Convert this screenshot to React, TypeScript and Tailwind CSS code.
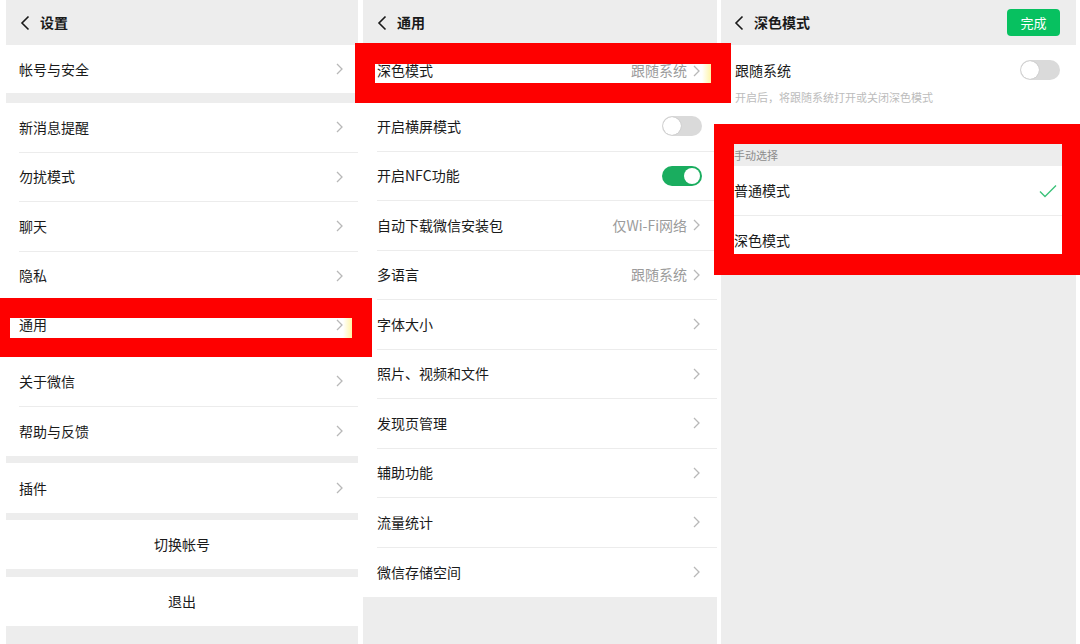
/** Three WeChat settings screens side by side, with red highlight frames. */
import React from "react";

const FONT = "font-['Noto_Sans_CJK_SC','Noto_Sans',sans-serif]";

function Chevron() {
  return (
    <svg width="7" height="12" viewBox="0 0 7 12" className="ml-[6px] shrink-0">
      <path d="M1 1l5 5-5 5" fill="none" stroke="#b8b8b8" strokeWidth="1.3" />
    </svg>
  );
}

function Back() {
  return (
    <svg width="10" height="16" viewBox="0 0 10 16" className="shrink-0">
      <path d="M8.5 1.5L2 8l6.5 6.5" fill="none" stroke="#1a1a1a" strokeWidth="1.6" />
    </svg>
  );
}

function Toggle({ on }: { on: boolean }) {
  if (on) {
    return (
      <div className="flex h-[20px] w-[40px] items-center justify-end rounded-full bg-[#1aad5f] p-[2px]">
        <div className="h-[16px] w-[16px] rounded-full bg-white" />
      </div>
    );
  }
  return (
    <div className="flex h-[20px] w-[40px] items-center rounded-full bg-[#dadada] p-[1px]">
      <div className="h-[18px] w-[18px] rounded-full bg-white shadow-[0_0_1px_rgba(0,0,0,0.3)]" />
    </div>
  );
}

function Header({ title, pad, action }: { title: string; pad: string; action?: React.ReactNode }) {
  return (
    <div className={`flex h-[45px] items-center justify-between bg-[#ededed] ${pad} pr-[16px]`}>
      <div className="flex items-center gap-[10px]">
        <Back />
        <span className="text-[14px] font-bold text-[#1a1a1a]">{title}</span>
      </div>
      {action}
    </div>
  );
}

type RowProps = {
  label: string;
  value?: string;
  right?: React.ReactNode;
  line?: boolean;
  h?: string;
  pl?: string;
  pr?: string;
};

function Row({ label, value, right, line = true, h = "h-[49.5px]", pl = "pl-[13px]", pr = "pr-[15px]" }: RowProps) {
  return (
    <div className={`bg-white ${pl}`}>
      <div className={`flex items-center justify-between ${h} ${pr} ${line ? "border-b border-[#ececec]" : ""}`}>
        <span className="text-[14px] text-[#1a1a1a]">{label}</span>
        <div className="flex items-center">
          {value && <span className="text-[14px] text-[#9b9b9b]">{value}</span>}
          {right ?? <Chevron />}
        </div>
      </div>
    </div>
  );
}

function CenterRow({ label }: { label: string }) {
  return (
    <div className="flex h-[49px] items-center justify-center bg-white text-[14px] text-[#1a1a1a]">{label}</div>
  );
}

function SettingsPanel() {
  return (
    <div className="ml-[6px] flex w-[352px] flex-col bg-[#ededed]">
      <Header title="设置" pad="pl-[14px]" />
      <Row label="帐号与安全" h="h-[48px]" line={false} />
      <div className="h-[10px]" />
      <Row label="新消息提醒" />
      <Row label="勿扰模式" />
      <Row label="聊天" />
      <Row label="隐私" />
      <Row label="通用" h="h-[56px] pb-[8px]" />
      <Row label="关于微信" />
      <Row label="帮助与反馈" line={false} />
      <div className="h-[7px]" />
      <Row label="插件" h="h-[50px]" line={false} />
      <div className="h-[7px]" />
      <CenterRow label="切换帐号" />
      <div className="h-[8px]" />
      <CenterRow label="退出" />
    </div>
  );
}

function GeneralPanel() {
  const rows: RowProps[] = [
    { label: "开启横屏模式", right: <Toggle on={false} /> },
    { label: "开启NFC功能", right: <Toggle on /> },
    { label: "自动下载微信安装包", value: "仅Wi-Fi网络" },
    { label: "多语言", value: "跟随系统" },
    { label: "字体大小" },
    { label: "照片、视频和文件" },
    { label: "发现页管理" },
    { label: "辅助功能" },
    { label: "流量统计" },
    { label: "微信存储空间", line: false },
  ];
  return (
    <div className="ml-[5px] flex w-[354px] flex-col bg-[#ededed]">
      <Header title="通用" pad="pl-[14px]" />
      <Row label="深色模式" value="跟随系统" h="h-[57px] pb-[5px]" pl="pl-[14px]" pr="pr-[17px]" />
      {rows.map((r) => (
        <Row key={r.label} {...r} pl="pl-[14px]" pr={r.right ? "pr-[15px]" : "pr-[17px]"} />
      ))}
    </div>
  );
}

function DarkModePanel() {
  return (
    <div className="ml-[4px] flex w-[355px] flex-col bg-[#ededed]">
      <Header
        title="深色模式"
        pad="pl-[13px]"
        action={
          <div className="flex h-[27px] w-[53px] items-center justify-center rounded-[4px] bg-[#07c160] text-[13px] text-white">
            完成
          </div>
        }
      />
      <div className="h-[80px] bg-white px-[14px] pr-[16px] pt-[15px]">
        <div className="flex h-[20px] items-center justify-between">
          <span className="text-[14px] text-[#1a1a1a]">跟随系统</span>
          <Toggle on={false} />
        </div>
        <div className="mt-[10px] text-[11px] leading-[14px] text-[#bcbcbc]">开启后，将跟随系统打开或关闭深色模式</div>
      </div>
      <div className="h-[19px]" />
      <div className="flex h-[22px] items-center pl-[13px] text-[11px] text-[#8c8c8c]">手动选择</div>
      <Row
        label="普通模式"
        h="h-[50px]"
        pr="pr-[19px]"
        right={
          <svg width="18" height="14" viewBox="0 0 18 14">
            <path d="M1 7.5l5 5L17 1.5" fill="none" stroke="#3cc27a" strokeWidth="1.4" />
          </svg>
        }
      />
      <Row label="深色模式" h="h-[48px]" line={false} right={<span />} />
    </div>
  );
}

function Tint() {
  return <div className="absolute right-0 top-0 h-full w-[9px] bg-gradient-to-r from-transparent to-[#fff5a8]" />;
}

export default function App() {
  return (
    <div className={`relative flex h-[644px] w-[1080px] overflow-hidden bg-white ${FONT}`}>
      <SettingsPanel />
      <GeneralPanel />
      <DarkModePanel />

      {/* red highlight frames drawn over the screenshots */}
      <div className="absolute left-0 top-[298px] h-[59px] w-[372px] border-b-[19px] border-l-[10px] border-r-[20px] border-t-[20px] border-[#fe0000]">
        <Tint />
      </div>
      <div className="absolute left-[355px] top-[43px] h-[60px] w-[376px] border-b-[20px] border-l-[20px] border-r-[20px] border-t-[21px] border-[#fe0000]">
        <Tint />
      </div>
      <div className="absolute left-[714px] top-[124px] h-[151px] w-[366px] border-b-[21px] border-l-[20px] border-r-[18px] border-t-[20px] border-[#fe0000]" />
    </div>
  );
}
